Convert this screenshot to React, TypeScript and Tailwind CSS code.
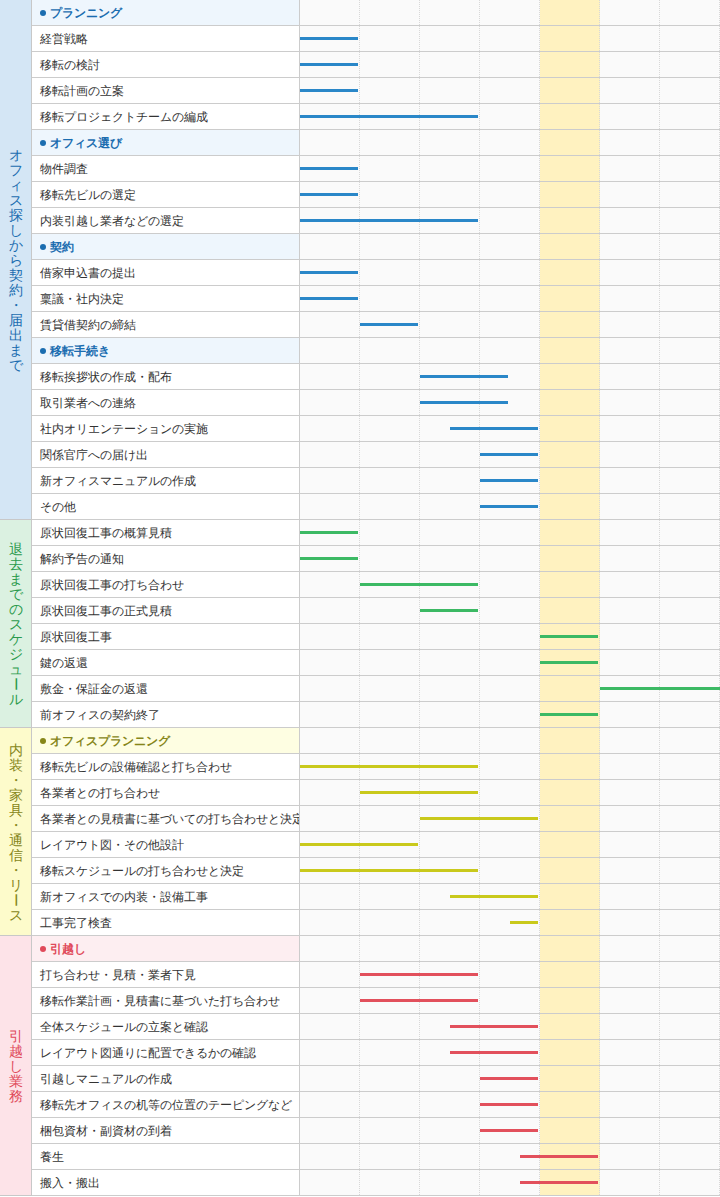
import React from 'react';

type Row = { label: string; header?: boolean; bar?: [number, number] };
type Section = {
  title: string;
  side: string;
  sideText: string;
  headBg: string;
  headText: string;
  dot: string;
  barColor: string;
  rows: Row[];
};

const sections: Section[] = [
  {
    title: 'オフィス探しから契約・届出まで',
    side: 'bg-[#d4e6f5]',
    sideText: 'text-[#1b6db0]',
    headBg: 'bg-[#eef6fd]',
    headText: 'text-[#1b6db0]',
    dot: 'bg-[#1b6db0]',
    barColor: '#2a87c8',
    rows: [
      { label: 'プランニング', header: true },
      { label: '経営戦略', bar: [300, 358] },
      { label: '移転の検討', bar: [300, 358] },
      { label: '移転計画の立案', bar: [300, 358] },
      { label: '移転プロジェクトチームの編成', bar: [300, 478] },
      { label: 'オフィス選び', header: true },
      { label: '物件調査', bar: [300, 358] },
      { label: '移転先ビルの選定', bar: [300, 358] },
      { label: '内装引越し業者などの選定', bar: [300, 478] },
      { label: '契約', header: true },
      { label: '借家申込書の提出', bar: [300, 358] },
      { label: '稟議・社内決定', bar: [300, 358] },
      { label: '賃貸借契約の締結', bar: [360, 418] },
      { label: '移転手続き', header: true },
      { label: '移転挨拶状の作成・配布', bar: [420, 508] },
      { label: '取引業者への連絡', bar: [420, 508] },
      { label: '社内オリエンテーションの実施', bar: [450, 538] },
      { label: '関係官庁への届け出', bar: [480, 538] },
      { label: '新オフィスマニュアルの作成', bar: [480, 538] },
      { label: 'その他', bar: [480, 538] },
    ],
  },
  {
    title: '退去までのスケジュール',
    side: 'bg-[#dbf1e1]',
    sideText: 'text-[#2a9a4c]',
    headBg: '',
    headText: '',
    dot: '',
    barColor: '#3cb964',
    rows: [
      { label: '原状回復工事の概算見積', bar: [300, 358] },
      { label: '解約予告の通知', bar: [300, 358] },
      { label: '原状回復工事の打ち合わせ', bar: [360, 478] },
      { label: '原状回復工事の正式見積', bar: [420, 478] },
      { label: '原状回復工事', bar: [540, 598] },
      { label: '鍵の返還', bar: [540, 598] },
      { label: '敷金・保証金の返還', bar: [600, 720] },
      { label: '前オフィスの契約終了', bar: [540, 598] },
    ],
  },
  {
    title: '内装・家具・通信・リース',
    side: 'bg-[#fdfbcb]',
    sideText: 'text-[#86861a]',
    headBg: 'bg-[#fefee2]',
    headText: 'text-[#86861a]',
    dot: 'bg-[#86861a]',
    barColor: '#c9c91c',
    rows: [
      { label: 'オフィスプランニング', header: true },
      { label: '移転先ビルの設備確認と打ち合わせ', bar: [300, 478] },
      { label: '各業者との打ち合わせ', bar: [360, 478] },
      { label: '各業者との見積書に基づいての打ち合わせと決定', bar: [420, 538] },
      { label: 'レイアウト図・その他設計', bar: [300, 418] },
      { label: '移転スケジュールの打ち合わせと決定', bar: [300, 478] },
      { label: '新オフィスでの内装・設備工事', bar: [450, 538] },
      { label: '工事完了検査', bar: [510, 538] },
    ],
  },
  {
    title: '引越し業務',
    side: 'bg-[#fde3e8]',
    sideText: 'text-[#e04a5a]',
    headBg: 'bg-[#fdeef1]',
    headText: 'text-[#e04a5a]',
    dot: 'bg-[#e04a5a]',
    barColor: '#e2505c',
    rows: [
      { label: '引越し', header: true },
      { label: '打ち合わせ・見積・業者下見', bar: [360, 478] },
      { label: '移転作業計画・見積書に基づいた打ち合わせ', bar: [360, 478] },
      { label: '全体スケジュールの立案と確認', bar: [450, 538] },
      { label: 'レイアウト図通りに配置できるかの確認', bar: [450, 538] },
      { label: '引越しマニュアルの作成', bar: [480, 538] },
      { label: '移転先オフィスの机等の位置のテーピングなど', bar: [480, 538] },
      { label: '梱包資材・副資材の到着', bar: [480, 538] },
      { label: '養生', bar: [520, 598] },
      { label: '搬入・搬出', bar: [520, 598] },
    ],
  },
];

const cols = [0, 1, 2, 3, 4, 5, 6];

function ChartCells({ bar, color }: { bar?: [number, number]; color: string }) {
  return (
    <div className="relative flex w-[420px] h-full">
      {cols.map((c) => (
        <div
          key={c}
          className={`w-[60px] h-full border-r border-dotted border-[#d8d8d8] ${c === 4 ? 'bg-[#fff2c0]' : 'bg-[#fafafa]'}`}
        />
      ))}
      {bar && (
        <div
          className="absolute top-[11px] h-[3px]"
          style={{ left: bar[0] - 300, width: bar[1] - bar[0], background: color }}
        />
      )}
    </div>
  );
}

function SideLabel({ text, className }: { text: string; className: string }) {
  return (
    <div className={`flex flex-col items-center text-[14px] leading-[15px] font-medium ${className}`}>
      {Array.from(text).map((ch, i) => (
        <span key={i} className={ch === 'ー' ? 'rotate-90 inline-block' : ''}>
          {ch}
        </span>
      ))}
    </div>
  );
}

export default function App() {
  return (
    <div className="w-[720px] bg-white text-[12px] text-[#333] font-['Noto_Sans_CJK_JP','Noto_Sans',sans-serif]">
      {sections.map((s) => (
        <div key={s.title} className="flex">
          <div className={`w-[32px] shrink-0 border-r border-b border-[#c8c8c8] flex items-center justify-center overflow-hidden ${s.side}`}>
            <SideLabel text={s.title} className={s.sideText} />
          </div>
          <div className="flex-1">
            {s.rows.map((r) => (
              <div key={r.label} className="flex h-[26px] border-b border-[#cccccc]">
                {r.header ? (
                  <div className={`w-[268px] shrink-0 flex items-center gap-[4px] pl-[8px] border-r border-[#cccccc] font-bold ${s.headBg} ${s.headText}`}>
                    <span className={`w-[6px] h-[6px] rounded-full ${s.dot}`} />
                    {r.label}
                  </div>
                ) : (
                  <div className="w-[268px] shrink-0 flex items-center pl-[8px] border-r border-[#cccccc] bg-white whitespace-nowrap overflow-hidden">
                    {r.label}
                  </div>
                )}
                <ChartCells bar={r.bar} color={s.barColor} />
              </div>
            ))}
          </div>
        </div>
      ))}
    </div>
  );
}
